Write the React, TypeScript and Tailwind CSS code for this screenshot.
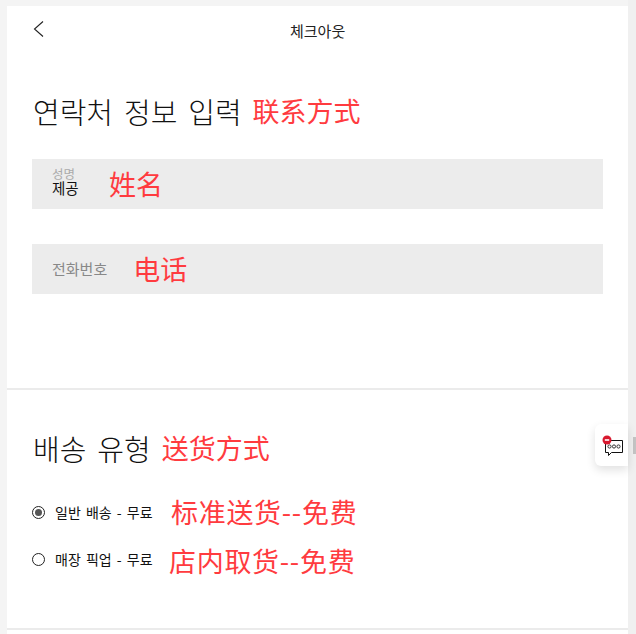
const KR = "font-['Noto_Sans_CJK_KR','Noto_Sans',sans-serif]"
const NOTE = "font-['Noto_Sans_CJK_SC','Noto_Sans_CJK_KR',sans-serif] text-[#ff3b3f] text-[27px] leading-[40px]"
const TITLE = "text-[29px] font-light leading-[40px] text-[#111] [word-spacing:4.5px]"
const OPTION = "ml-[10px] text-[14px] text-[#111] [word-spacing:2px]"

function Radio({ checked }: { checked?: boolean }) {
  return (
    <span className="flex h-[13px] w-[13px] shrink-0 items-center justify-center rounded-full border border-[#222]">
      {checked && <span className="h-[7px] w-[7px] rounded-full bg-[#555]" />}
    </span>
  )
}

function ChatWidget() {
  return (
    <div className="absolute left-[595px] top-[424px] h-[42px] w-[33px] rounded-l-md bg-white pl-[7px] pt-[11px] shadow-[0_4px_10px_rgba(0,0,0,0.12)]">
      <svg width="22" height="22" viewBox="0 0 22 22" fill="none">
        <path d="M3.5 5.5h17v12h-11l-3 3v-3h-3z" fill="#fff" stroke="#111" strokeWidth="1" />
        <circle cx="7.5" cy="11.5" r="1.6" stroke="#333" strokeWidth="1" />
        <circle cx="12" cy="11.5" r="1.6" stroke="#333" strokeWidth="1" />
        <circle cx="16.5" cy="11.5" r="1.6" stroke="#333" strokeWidth="1" />
        <circle cx="5" cy="5" r="4.5" fill="#d8192f" />
        <rect x="2.8" y="4.2" width="4.4" height="1.6" fill="#fff" />
      </svg>
    </div>
  )
}

export default function App() {
  return (
    <div className={`relative flex h-[634px] w-[636px] overflow-hidden bg-[#f4f4f4] pl-[7px] pt-[6px] ${KR}`}>
      <div className="w-[621px] bg-white">
        {/* header */}
        <div className="relative h-[50px]">
          <svg width="12" height="18" viewBox="0 0 12 18" fill="none" className="absolute left-[26px] top-[14px]">
            <path d="M10 1.5 1.5 9 10 16.5" stroke="#222" strokeWidth="1.1" />
          </svg>
          <p className="pt-[15px] pl-[283px] text-[15px] leading-[20px] text-[#222]">체크아웃</p>
        </div>

        {/* contact */}
        <div className="h-[334px] border-b-2 border-[#ebebeb] pl-[25px] pt-[35px]">
          <div className="flex h-[40px] items-center gap-[11px] pl-[1px]">
            <h2 className={TITLE}>연락처 정보 입력</h2>
            <span className={NOTE}>联系方式</span>
          </div>

          <div className="mt-[28px] flex h-[50px] w-[571px] items-center bg-[#ececec] pl-[20px]">
            <div className="w-[57px] pb-[6px]">
              <p className="text-[12.5px] leading-[13px] text-[#aaa]">성명</p>
              <p className="text-[14.5px] leading-[16px] text-[#111]">제공</p>
            </div>
            <span className={NOTE}>姓名</span>
          </div>

          <div className="mt-[35px] flex h-[50px] w-[571px] items-center gap-[26px] bg-[#ececec] pl-[20px]">
            <p className="text-[15px] leading-[20px] text-[#888]">전화번호</p>
            <span className={NOTE}>电话</span>
          </div>
        </div>

        {/* delivery */}
        <div className="h-[240px] border-b-2 border-[#ebebeb] pl-[25px] pt-[38px]">
          <div className="flex h-[40px] items-center gap-[11px] pl-[1px]">
            <h2 className={TITLE}>배송 유형</h2>
            <span className={NOTE}>送货方式</span>
          </div>

          <div className="mt-[24px] flex h-[40px] items-center">
            <Radio checked />
            <span className={`${OPTION} w-[116px]`}>일반 배송 - 무료</span>
            <span className={`${NOTE} tracking-[0.7px]`}>标准送货--免费</span>
          </div>
          <div className="mt-[7px] flex h-[40px] items-center">
            <Radio />
            <span className={`${OPTION} w-[114px]`}>매장 픽업 - 무료</span>
            <span className={`${NOTE} mt-[3px] tracking-[0.7px]`}>店内取货--免费</span>
          </div>
        </div>
      </div>

      {/* scrollbar */}
      <div className="absolute right-0 top-0 h-full w-[8px] bg-[#f0f0f0]">
        <div className="absolute left-[5px] top-[437px] h-[17px] w-[3px] bg-[#c4c4c4]" />
      </div>

      <ChatWidget />
    </div>
  )
}
